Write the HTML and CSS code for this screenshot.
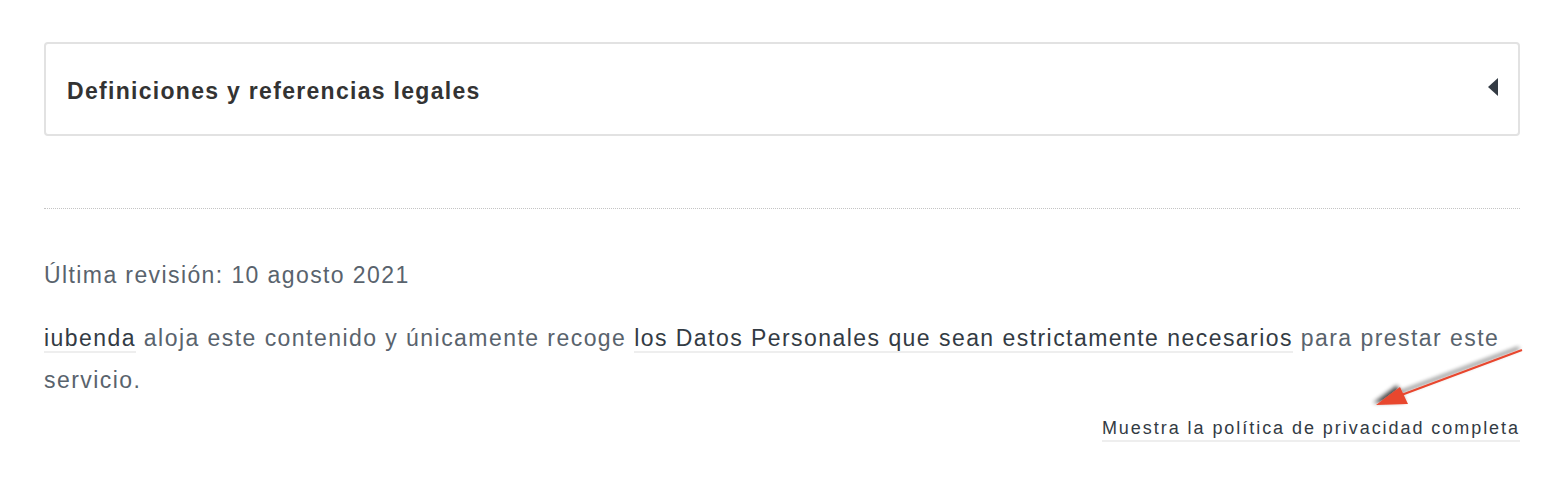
FILE: index.html
```html
<!DOCTYPE html>
<html lang="es">

<head>
    <meta charset="UTF-8">
    <meta name="viewport" content="width=device-width, initial-scale=1.0">
    <title>Política de privacidad</title>
    <link rel="stylesheet" href="styles.css">
</head>

<body>
    <div class="page">
        <div class="box">
            <h3>Definiciones y referencias legales</h3>
            <span class="toggle"></span>
        </div>

        <hr class="dotted">

        <p class="revision">Última revisión: 10 agosto 2021</p>
        <p class="hosted">
            <a href="#">iubenda</a> aloja este contenido y únicamente recoge
            <a href="#">los Datos Personales que sean estrictamente necesarios</a> para prestar este servicio.
        </p>

        <div class="full">
            <a href="#">Muestra la política de privacidad completa</a>
        </div>

        <!-- annotation arrow -->
        <svg class="annot" width="170" height="80" viewBox="0 0 170 80">
            <defs>
                <filter id="sh" x="-20%" y="-50%" width="140%" height="200%">
                    <feGaussianBlur in="SourceAlpha" stdDeviation="2.2" />
                    <feOffset dx="-3" dy="-2" result="b" />
                    <feComponentTransfer>
                        <feFuncA type="linear" slope="0.7" />
                    </feComponentTransfer>
                    <feMerge>
                        <feMergeNode />
                        <feMergeNode in="SourceGraphic" />
                    </feMerge>
                </filter>
            </defs>
            <g filter="url(#sh)">
                <line x1="166" y1="8" x2="40" y2="55" stroke="#e8462e" stroke-width="2" />
                <polygon points="20,63 44,45 52,62" fill="#e8462e" />
            </g>
        </svg>
    </div>
</body>

</html>
```

FILE: styles.css
```css
body {
    margin: 0;
    background-color: #fff;
    font-family: "Liberation Sans", Arial, sans-serif;
}

.page {
    position: relative;
    padding: 42px 46px 30px 44px;
}

.box {
    display: flex;
    align-items: center;
    justify-content: space-between;
    box-sizing: border-box;
    height: 94px;
    padding: 4px 20px 0 21px;
    border: 2px solid #e2e2e2;
    border-radius: 4px;
}

.box h3 {
    margin: 0;
    font-size: 23px;
    letter-spacing: 1.3px;
    font-weight: bold;
    color: #333;
}

.toggle {
    width: 0;
    height: 0;
    margin-top: -8px;
    border-top: 9px solid transparent;
    border-bottom: 9px solid transparent;
    border-right: 10px solid #333b44;
}

.dotted {
    margin: 72px 0 0;
    border: 0;
    border-top: 1px dotted #c4c4c4;
}

.revision {
    margin: 53px 0 0;
    font-size: 23px;
    letter-spacing: 1.4px;
    color: #59636d;
}

.hosted {
    margin: 28px 0 0;
    font-size: 23px;
    letter-spacing: 1.45px;
    line-height: 42px;
    color: #59636d;
}

.hosted a,
.full a {
    color: #333b44;
    text-decoration: none;
    border-bottom: 2px solid #eeeeee;
}

.full {
    margin-top: 17px;
    text-align: right;
    font-size: 18px;
    letter-spacing: 1.95px;
}

.full a {
    padding-bottom: 2px;
}

.annot {
    position: absolute;
    left: 1356px;
    top: 342px;
}
```
